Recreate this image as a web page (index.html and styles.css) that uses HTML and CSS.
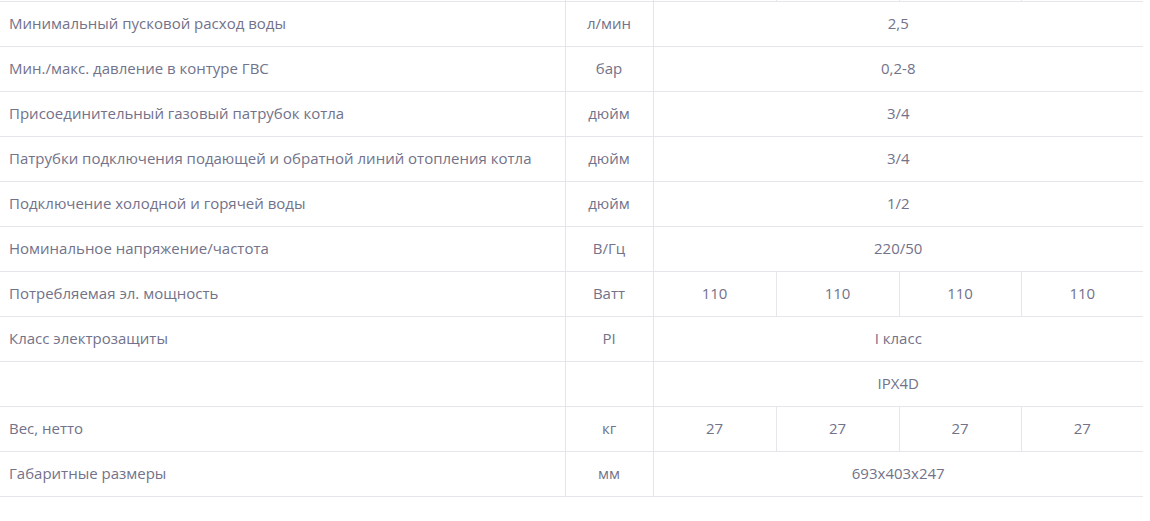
FILE: index.html
```html
<!DOCTYPE html>
<html lang="ru">
<head>
<meta charset="utf-8">
<title>Характеристики</title>
<link rel="stylesheet" href="styles.css">
</head>
<body>
<table class="spec">
  <colgroup>
    <col class="c-name"><col class="c-unit"><col class="c-val-a"><col class="c-val-a"><col class="c-val-b"><col class="c-val-b">
  </colgroup>
  <tbody>
    <tr class="cut"><td></td><td></td><td></td><td></td><td></td><td></td></tr>
    <tr><td class="name">Минимальный пусковой расход воды</td><td class="unit">л/мин</td><td colspan="4">2,5</td></tr>
    <tr><td class="name">Мин./макс. давление в контуре ГВС</td><td class="unit">бар</td><td colspan="4">0,2-8</td></tr>
    <tr><td class="name">Присоединительный газовый патрубок котла</td><td class="unit">дюйм</td><td colspan="4">3/4</td></tr>
    <tr><td class="name">Патрубки подключения подающей и обратной линий отопления котла</td><td class="unit">дюйм</td><td colspan="4">3/4</td></tr>
    <tr><td class="name">Подключение холодной и горячей воды</td><td class="unit">дюйм</td><td colspan="4">1/2</td></tr>
    <tr><td class="name">Номинальное напряжение/частота</td><td class="unit">В/Гц</td><td colspan="4">220/50</td></tr>
    <tr><td class="name">Потребляемая эл. мощность</td><td class="unit">Ватт</td><td>110</td><td>110</td><td>110</td><td>110</td></tr>
    <tr><td class="name">Класс электрозащиты</td><td class="unit">PI</td><td colspan="4">I класс</td></tr>
    <tr><td class="name"></td><td class="unit"></td><td colspan="4">IPX4D</td></tr>
    <tr><td class="name">Вес, нетто</td><td class="unit">кг</td><td>27</td><td>27</td><td>27</td><td>27</td></tr>
    <tr><td class="name">Габаритные размеры</td><td class="unit">мм</td><td colspan="4">693x403x247</td></tr>
  </tbody>
</table>
</body>
</html>
```

FILE: styles.css
```css
html, body {
  margin: 0;
  padding: 0;
  background: #ffffff;
}

.spec {
  width: 1143px;
  table-layout: fixed;
  border-collapse: collapse;
  font-family: "Open Sans", "Liberation Sans", sans-serif;
  font-size: 15px;
  color: #72728a;
}

.c-name { width: 565px; }
.c-unit { width: 88px; }
.c-val-a { width: 123px; }
.c-val-b { width: 122px; }

.spec td {
  height: 42px;
  padding: 0 9px 2px;
  border-bottom: 1px solid #e6e6ea;
  border-right: 1px solid #e6e6ea;
  text-align: center;
  vertical-align: middle;
  white-space: nowrap;
}

.spec td:last-child {
  border-right: none;
}

.spec td.name {
  text-align: left;
}

.spec tr.cut td {
  height: 1px;
  padding: 0;
}
```
